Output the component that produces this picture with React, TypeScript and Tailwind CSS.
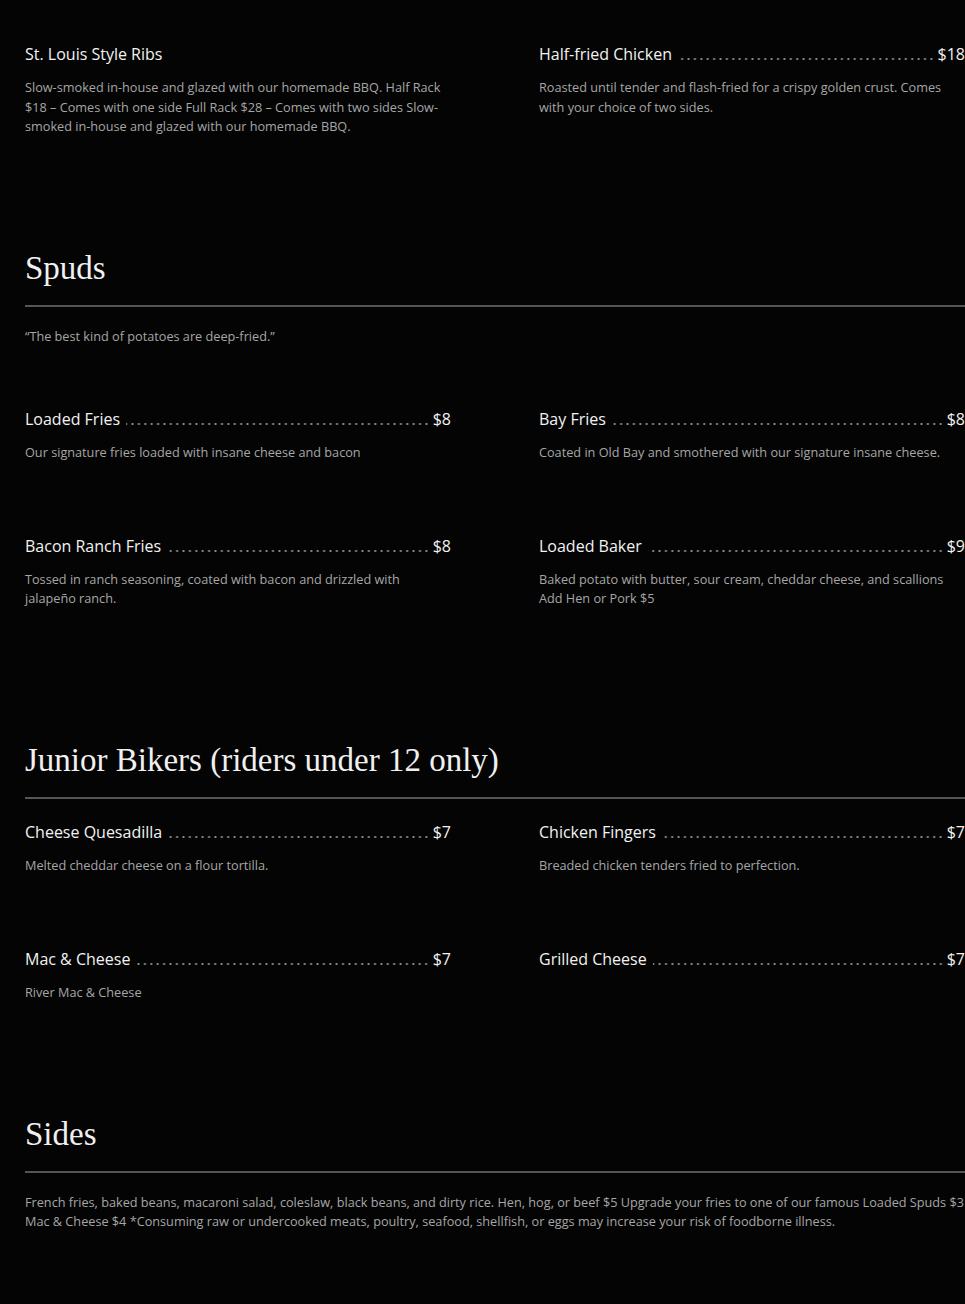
type Item = { name: string; price?: string; desc?: string };

const topItems: Item[] = [
  {
    name: "St. Louis Style Ribs",
    desc: "Slow-smoked in-house and glazed with our homemade BBQ. Half Rack $18 – Comes with one side Full Rack $28 – Comes with two sides Slow-smoked in-house and glazed with our homemade BBQ.",
  },
  {
    name: "Half-fried Chicken",
    price: "$18",
    desc: "Roasted until tender and flash-fried for a crispy golden crust. Comes with your choice of two sides.",
  },
];

const spuds: Item[] = [
  { name: "Loaded Fries", price: "$8", desc: "Our signature fries loaded with insane cheese and bacon" },
  { name: "Bay Fries", price: "$8", desc: "Coated in Old Bay and smothered with our signature insane cheese." },
  { name: "Bacon Ranch Fries", price: "$8", desc: "Tossed in ranch seasoning, coated with bacon and drizzled with jalapeño ranch." },
  { name: "Loaded Baker", price: "$9", desc: "Baked potato with butter, sour cream, cheddar cheese, and scallions Add Hen or Pork $5" },
];

const junior: Item[] = [
  { name: "Cheese Quesadilla", price: "$7", desc: "Melted cheddar cheese on a flour tortilla." },
  { name: "Chicken Fingers", price: "$7", desc: "Breaded chicken tenders fried to perfection." },
  { name: "Mac & Cheese", price: "$7", desc: "River Mac & Cheese" },
  { name: "Grilled Cheese", price: "$7" },
];

function MenuItem({ item }: { item: Item }) {
  return (
    <div className="min-h-[127px]">
      <div className="flex items-end text-[16px] leading-6 text-[#f2f2f2]">
        <span className="shrink-0 whitespace-nowrap">{item.name}</span>
        {item.price && (
          <>
            {/* dotted leader */}
            <span className="mb-[5px] ml-[6px] mr-[3px] h-[4px] flex-1 bg-[radial-gradient(circle,#8e8e8e_0.8px,transparent_1.3px)] bg-[length:6.4px_4px] bg-[position:right_center] bg-repeat-x" />
            <span className="shrink-0">{item.price}</span>
          </>
        )}
      </div>
      {item.desc && (
        <p className="mt-[12px] pr-2 text-[12.7px] leading-[19.5px] text-[#a6a6a6]">{item.desc}</p>
      )}
    </div>
  );
}

function Grid({ items }: { items: Item[] }) {
  return (
    <div className="grid grid-cols-2 gap-x-[88px]">
      {items.map((item) => (
        <MenuItem key={item.name} item={item} />
      ))}
    </div>
  );
}

function Heading({ children }: { children: string }) {
  return (
    <div className="border-b-2 border-[#555555] pb-[17px]">
      <h2 className="text-[33px] leading-10 text-[#f0f0f0] font-['Liberation_Serif',serif]">{children}</h2>
    </div>
  );
}

export default function App() {
  return (
    <div className="min-h-[1304px] overflow-hidden bg-[#040404] pl-[25px] pt-[42px] pb-[73px] font-['Open_Sans',sans-serif]">
      <Grid items={topItems} />

      <section className="mt-[79px]">
        <Heading>Spuds</Heading>
        <p className="mt-5 text-[12.7px] leading-[19.5px] text-[#a6a6a6]">“The best kind of potatoes are deep-fried.”</p>
        <div className="mt-[60px]">
          <Grid items={spuds} />
        </div>
      </section>

      <section className="mt-[79px]">
        <Heading>Junior Bikers (riders under 12 only)</Heading>
        <div className="mt-[21px]">
          <Grid items={junior} />
        </div>
      </section>

      <section className="mt-[40px]">
        <Heading>Sides</Heading>
        <p className="mt-5 text-[12.7px] leading-[19.5px] text-[#a6a6a6]">
          French fries, baked beans, macaroni salad, coleslaw, black beans, and dirty rice. Hen, hog, or beef $5 Upgrade your fries to one of our famous Loaded Spuds $3 Mac &amp; Cheese $4 *Consuming raw or undercooked meats, poultry, seafood, shellfish, or eggs may increase your risk of foodborne illness.
        </p>
      </section>
    </div>
  );
}
